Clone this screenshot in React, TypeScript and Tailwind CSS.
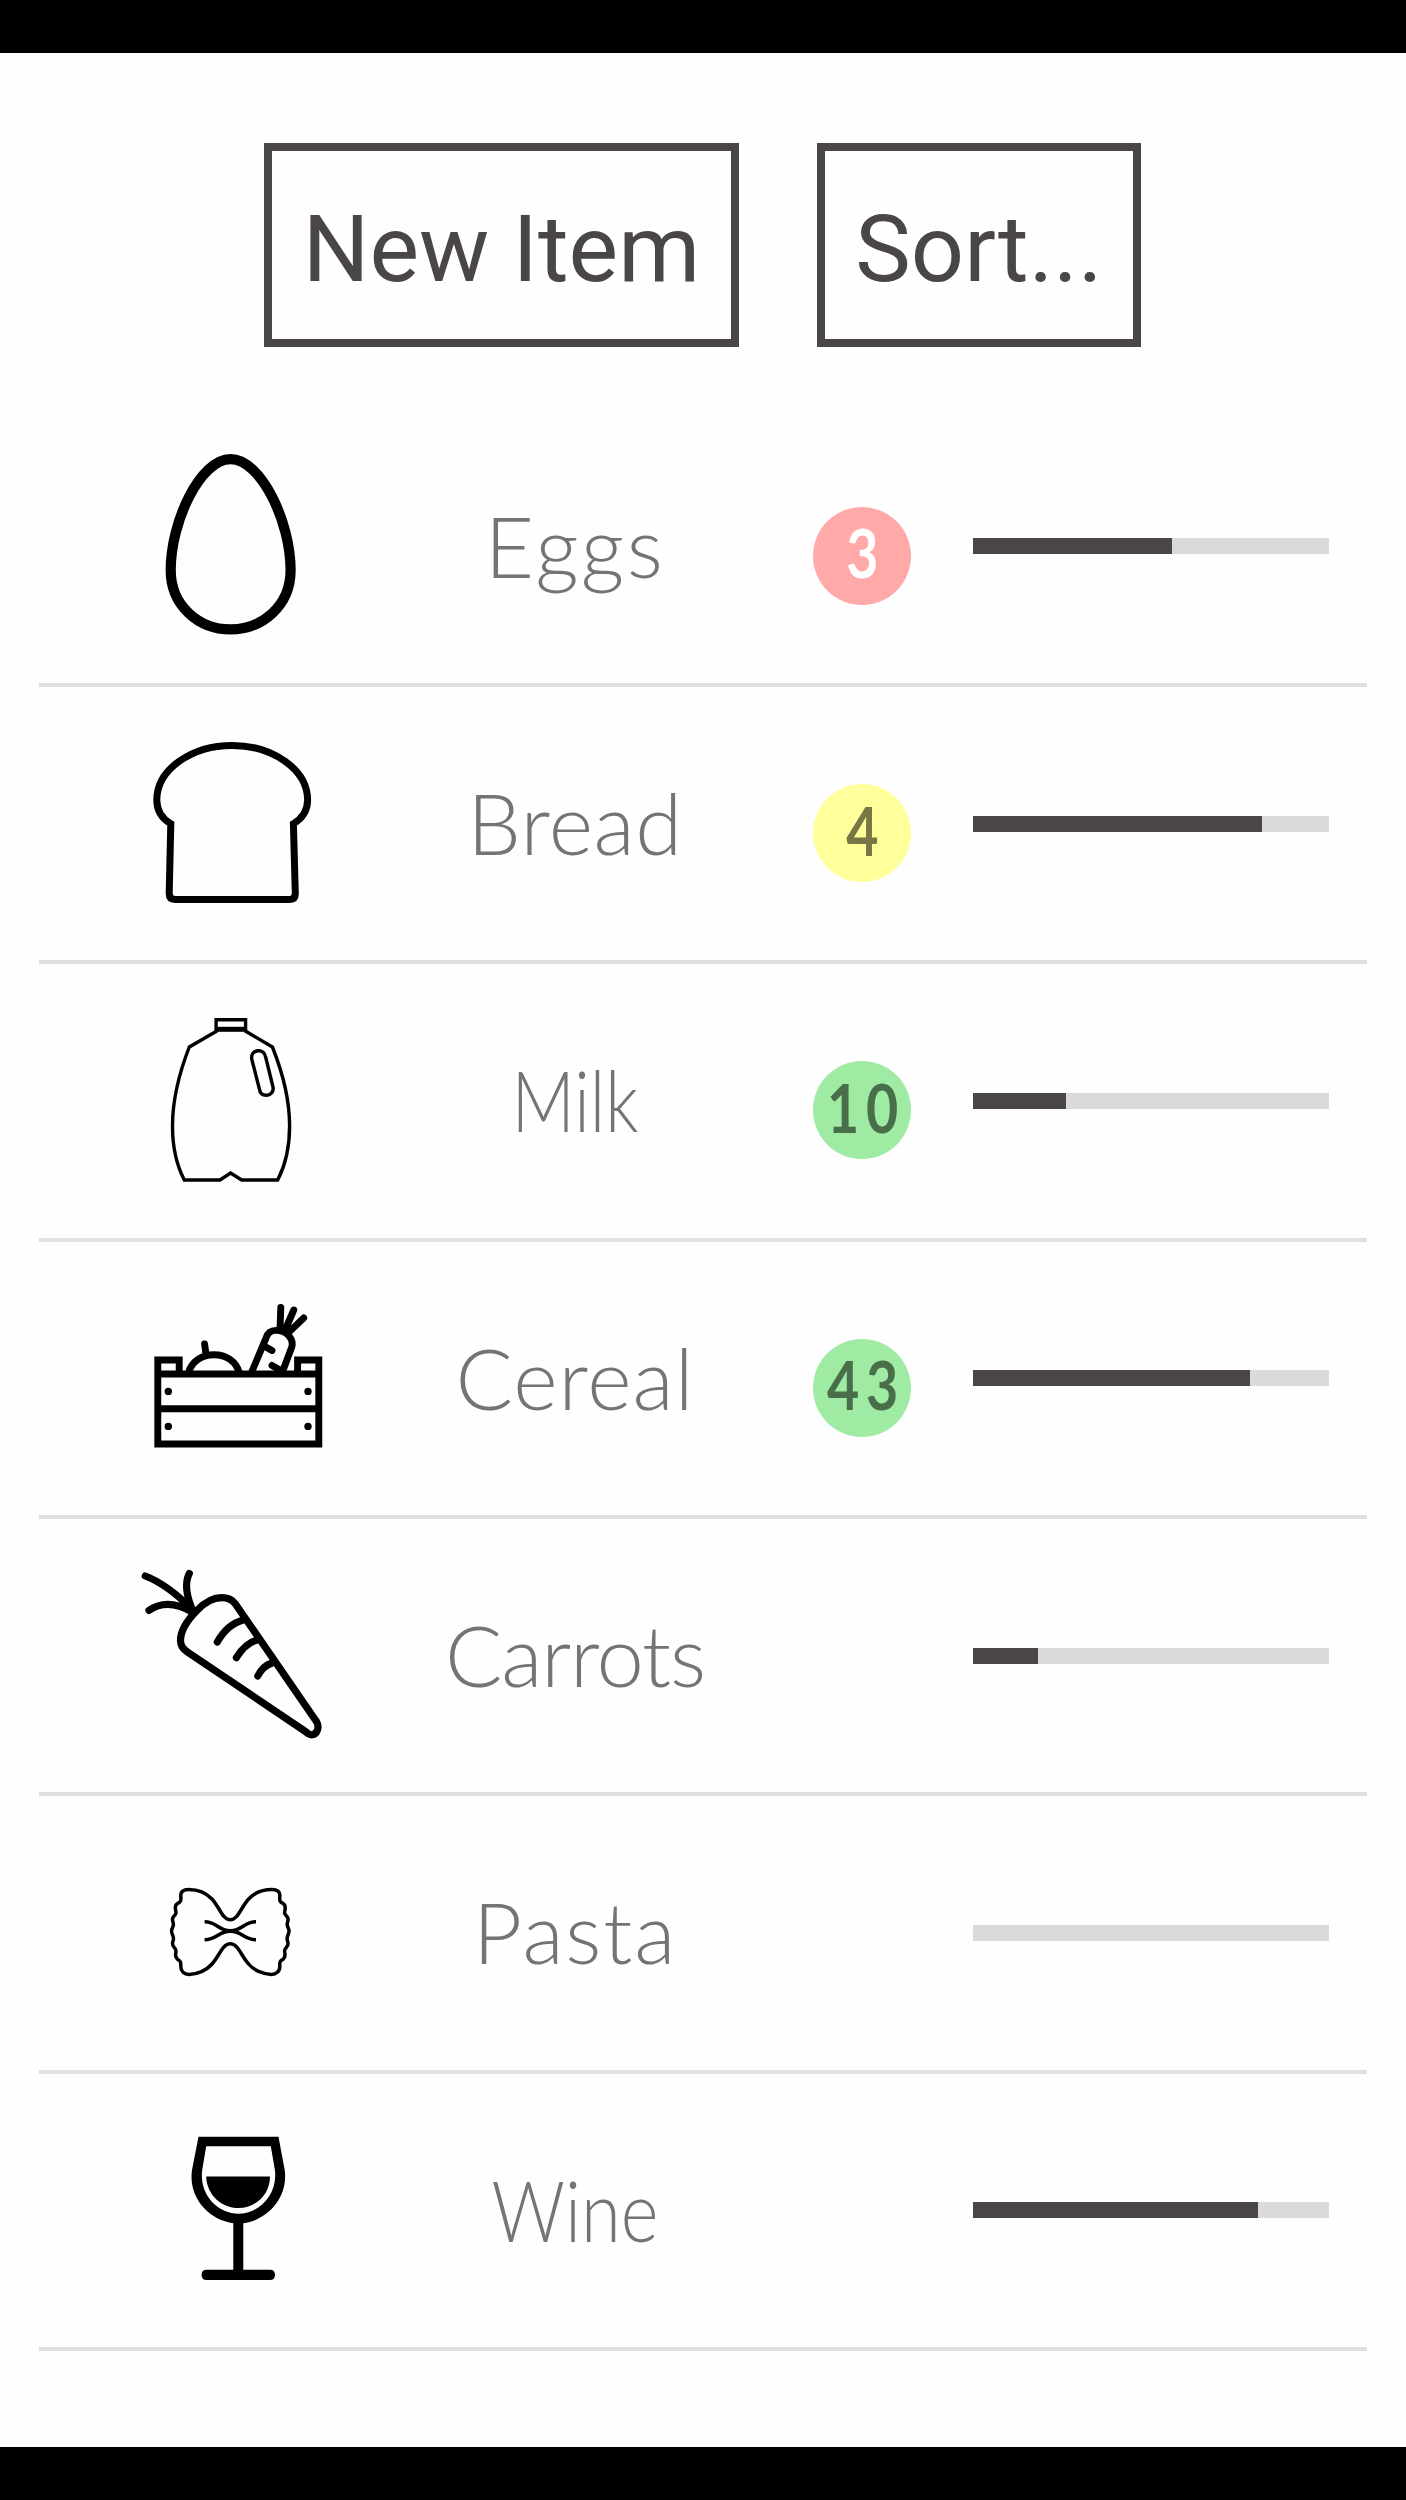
import type { ReactNode } from "react";
import { clsx } from "clsx";

type Tone = "danger" | "warning" | "ok";

type PantryItem = {
  name: string;
  icon: ReactNode;
  fit: string;
  percent: number;
  days?: number;
  tone?: Tone;
};

const toneStyles: Record<Tone, string> = {
  danger: "bg-[#ffa9a9] text-white",
  warning: "bg-[#ffff9b] text-[#777745]",
  ok: "bg-[#9feba3] text-[#486e4a]"
};

function Icon({ children, stroke }: { children: ReactNode; stroke: number }) {
  return (
    <svg viewBox="0 0 200 200" className="ml-[91px] size-[200px] shrink-0" fill="none" stroke="black" strokeWidth={stroke}>
      {children}
    </svg>
  );
}

const EggIcon = (
  <Icon stroke={10.2}>
    <path d="M100.6 13.2C131 13.2 160.6 76 160.6 124C160.6 160 132 183.4 100.6 183.4C69 183.4 40.7 160 40.7 124C40.7 76 70 13.2 100.6 13.2Z" />
  </Icon>
);

const BreadIcon = (
  <Icon stroke={7}>
    <path d="M40.8 99.7C31 94 26.8 86 26.8 76C26.8 45 62 21.4 102.2 21.4C142 21.4 177.6 45 177.6 76C177.6 86 173 94 163.4 99.7L165.3 169.5Q165.3 175.4 160 175.4H45Q39.2 175.4 39.2 169.5Z" />
  </Icon>
);

const MilkIcon = (
  <Icon stroke={3.4}>
    <path d="M86.1 18.7H115.6V28H86.1Z" />
    <path d="M85 28.3H117" strokeWidth={5} />
    <path d="M87.3 29.7L59.3 46C48 75 42.5 100 42.5 125C42.5 145 46 163 54.3 179H90L100.6 172L111.7 179H147.7C156 163 159.6 145 159.6 125C159.6 100 154 75 142.4 46L114.8 29.7" />
    <path d="M121.7 58C121 53 124 49.7 128.6 49.7C132 49.7 135 52 135.6 56L143 86C144 90.5 140.5 94.3 136 94.3C132.5 94.3 130 92 129.4 88Z" />
  </Icon>
);

const CrateIcon = (
  <Icon stroke={6.9}>
    <path d="M27.8 96H188.8V166H27.8ZM27.8 130.7H188.8M27.8 96V82H49.2V96M167.6 96V82H188.8V96" />
    <path d="M58.2 95C62 83 72 76.7 83.8 76.7C96 76.7 106 83 109.5 95M121.3 95L136 60C137.5 55 140.5 52.4 146 52.4C156 52.4 164 60 161.8 69L152 95" />
    <path
      strokeLinecap="round"
      d="M74.6 66L76 76M150.8 29.5L150 52M163.8 32L155.5 51M173.7 40L158.5 54.5M134 68L142 72.5M142 87.4L150 92"
    />
    <g fill="black" stroke="none">
      <circle cx="38.3" cy="113.4" r="3.7" />
      <circle cx="178" cy="113.4" r="3.7" />
      <circle cx="38.3" cy="148.4" r="3.7" />
      <circle cx="178" cy="148.4" r="3.7" />
    </g>
  </Icon>
);

const CarrotIcon = (
  <Icon stroke={7.2}>
    <g strokeLinecap="round">
      <path d="M67 54.4C76 45 84 41.7 91.8 41.7C98 41.7 102 43.5 105.2 47.7L186.4 165.4C190 171.5 187 178.8 181.4 178.8C179 178.8 177 177 175.3 175.4L57.4 96C53 93 50.5 89 50.5 84.4C50.5 76 57 64.5 67 54.4Z" />
      <path d="M15.3 20C31 26 47 38 63 54.4M59.3 17.4C54 28 57 42 63.5 56M19 54.4C31 46 46 46.5 62 56" />
      <path d="M87.3 86C94 74 103 66.5 114 63.7M106.4 101.7C112 92.5 119 86 128 83.7M127.8 120C131 113.5 136 109 142 107" />
    </g>
  </Icon>
);

const PastaIcon = (
  <Icon stroke={3.5}>
    <path
      strokeLinejoin="round"
      d="M58.6 56.4C68 56.4 76 59.5 82 66C90 75 92.5 86.7 100.3 86.7C108 86.7 110.6 75 118.6 66C124.6 59.5 134 56.4 142 56.4C147 56.4 150.3 59 149.8 63C149.3 69.5 150.6 69 153 70.4C157.5 73 154 77.5 154.7 80.4C155.3 83 159 83.5 158 87.5C156.8 92 156.8 92 158.6 96C159.6 98.4 159.2 99.5 158 102C156 106 157.5 106.5 158 110C158.5 114.5 155 114 154.7 117.4C154.4 121 156.5 123.5 153 126.4C150.5 128 149.5 128 149.8 133C150 138.5 146 141.4 141.3 141.4C134 141.4 124 137.5 118.6 131C110.6 122 108 110.7 100.3 110.7C92.5 110.7 90 122 82 131C76.5 137.5 67 141.4 59.3 141.4C54 141.4 50.6 138.5 50.8 133C51 128 50 128 47.6 126.4C44 123.5 46.2 121 45.9 117.4C45.6 114 42 114.5 42.6 110C43 106.5 44.6 106 42.6 102C41.4 99.5 41 98.4 42 96C43.8 92 43.8 92 42.6 87.5C41.6 83.5 45.3 83 45.9 80.4C46.6 77.5 43 73 47.6 70.4C50 69 51.3 69.5 50.8 63C50.3 59 53.5 56.4 58.6 56.4Z"
    />
    <path d="M74.6 88.7C87 88.7 88 97.7 100.3 97.7C112.6 97.7 113.6 88.7 126 88.7M74.6 106.7C87 106.7 88 98.3 100.3 98.3C112.6 98.3 113.6 106.7 126 106.7" />
  </Icon>
);

const WineIcon = (
  <Icon stroke={0}>
    <g fill="black" stroke="none">
      <path
        fillRule="evenodd"
        d="M68.5 26.7H148.5L154.7 60C158.5 88 137 110 113.3 113.3V159.7H140Q145 159.7 145 165Q145 170 140 170H76.6Q71.6 170 71.6 165Q71.6 159.7 76.6 159.7H103.3V113.3C79 110 58 88 62 60ZM76.2 36.3L72.2 60C69 85 88 103.7 108.5 103.7C129 103.7 148 85 144.9 60L140.8 36.3Z"
      />
      <path d="M76.2 66.4H140C140 85 125 98 108.5 98C91.5 98 76.8 85 76.2 66.4Z" />
    </g>
  </Icon>
);

const items: PantryItem[] = [
  { name: "Eggs", icon: EggIcon, fit: "tracking-[2.5px]", percent: 56.1, days: 3, tone: "danger" },
  { name: "Bread", icon: BreadIcon, fit: "tracking-[0.6px]", percent: 81.4, days: 4, tone: "warning" },
  { name: "Milk", icon: MilkIcon, fit: "scale-x-[0.82]", percent: 26.3, days: 10, tone: "ok" },
  { name: "Cereal", icon: CrateIcon, fit: "tracking-[1px]", percent: 78, days: 43, tone: "ok" },
  { name: "Carrots", icon: CarrotIcon, fit: "tracking-[-1.2px]", percent: 18.5 },
  { name: "Pasta", icon: PastaIcon, fit: "tracking-[1.8px]", percent: 0 },
  { name: "Wine", icon: WineIcon, fit: "scale-x-[0.85]", percent: 80.1 }
];

function DaysBadge({ days, tone }: { days?: number; tone?: Tone }) {
  return (
    <div className="mt-[19px] ml-[37.5px] size-[98px] shrink-0">
      {days !== undefined && tone ? (
        <div className={clsx("flex size-full items-center justify-center rounded-full pb-1.5 text-[67px] leading-none font-bold", toneStyles[tone])}>
          <span className="scale-x-[0.83] pl-[10px] tracking-[8px]">{days}</span>
        </div>
      ) : null}
    </div>
  );
}

function ItemRow({ item }: { item: PantryItem }) {
  return (
    <li className="flex h-[277.33px] items-center border-b-4 border-[#e0e0e0]">
      {item.icon}
      <span className={clsx("ml-[45px] w-[400px] shrink-0 pb-0.5 text-center text-[85px] leading-none font-light text-[#747474]", item.fit)}>
        {item.name}
      </span>
      <DaysBadge days={item.days} tone={item.tone} />
      <div className="ml-[62px] h-4 w-[356px] shrink-0 bg-[#dadada]">
        <div className="h-full bg-[#4a4646]" style={{ width: `${item.percent}%` }} />
      </div>
    </li>
  );
}

export default function App() {
  return (
    <div className="flex h-[2500px] w-[1406px] flex-col overflow-hidden bg-[#fefefe] font-['Lato',sans-serif]">
      <div className="h-[52.67px] shrink-0 bg-black" />
      <header className="flex h-[357px] shrink-0 items-start justify-center gap-[78px] pt-[90px] pr-px font-['Roboto',sans-serif] text-[93.5px] leading-none text-[#4a4646]">
        <button className="flex h-[204px] w-[475px] items-center justify-center border-8 border-[#4a4646] pt-[10px]">New Item</button>
        <button className="flex h-[204px] w-[324px] items-center justify-center border-8 border-[#4a4646] pt-[10px]">Sort...</button>
      </header>
      <ul className="mx-[39px] flex-1">
        {items.map((item) => (
          <ItemRow key={item.name} item={item} />
        ))}
      </ul>
      <div className="h-[53px] shrink-0 bg-black" />
    </div>
  );
}
